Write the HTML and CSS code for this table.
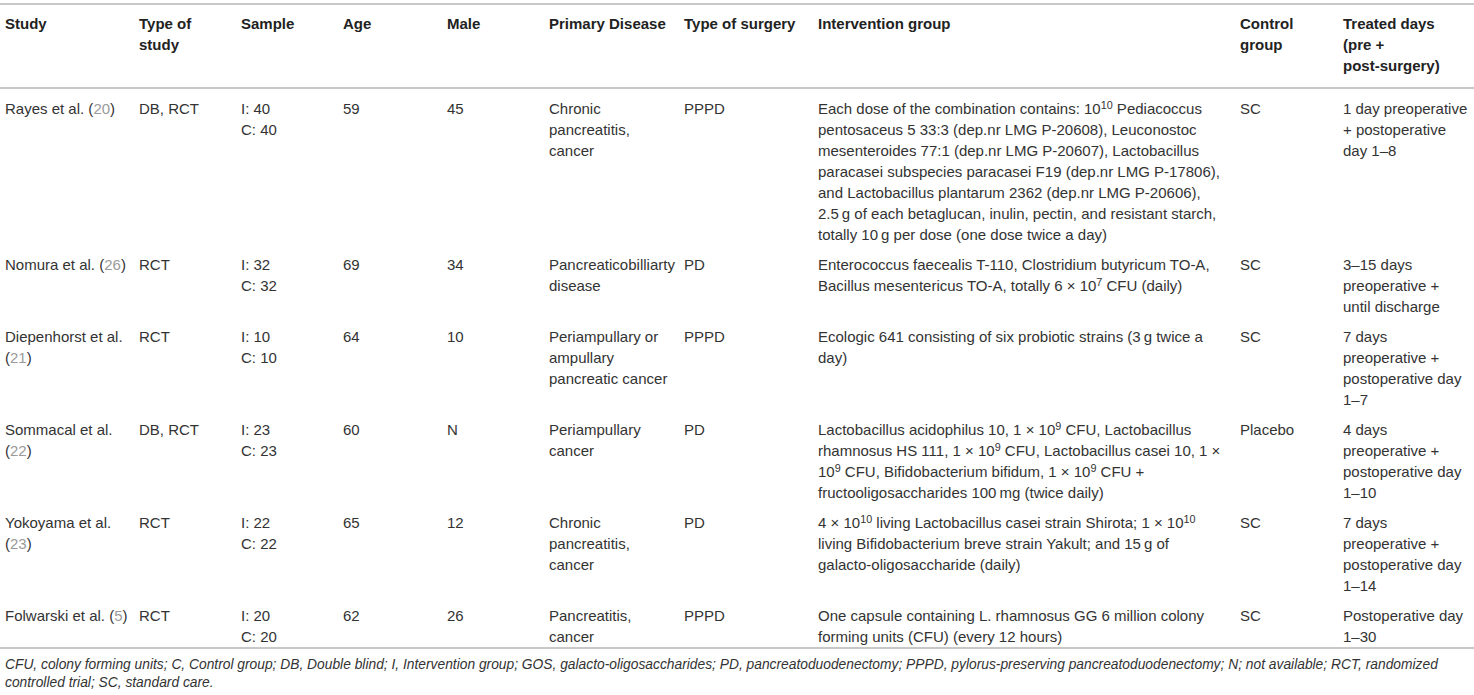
FILE: index.html
```html
<!DOCTYPE html>
<html lang="en">
<head>
<meta charset="utf-8">
<title>Probiotic studies table</title>
<link rel="stylesheet" href="styles.css">
</head>
<body>
<div class="wrap">
<table class="data">
  <colgroup>
    <col class="c1"><col class="c2"><col class="c3"><col class="c4"><col class="c5">
    <col class="c6"><col class="c7"><col class="c8"><col class="c9"><col class="c10">
  </colgroup>
  <thead>
    <tr>
      <th>Study</th>
      <th>Type of study</th>
      <th>Sample</th>
      <th>Age</th>
      <th>Male</th>
      <th>Primary Disease</th>
      <th>Type of surgery</th>
      <th>Intervention group</th>
      <th>Control group</th>
      <th>Treated days<br>(pre +<br>post-surgery)</th>
    </tr>
  </thead>
  <tbody>
    <tr>
      <td>Rayes et al. (<a class="ref">20</a>)</td>
      <td>DB, RCT</td>
      <td>I: 40<br>C: 40</td>
      <td>59</td>
      <td>45</td>
      <td>Chronic pancreatitis, cancer</td>
      <td>PPPD</td>
      <td>Each dose of the combination contains: 10<sup>10</sup> Pediacoccus pentosaceus 5 33:3 (dep.nr LMG P-20608), Leuconostoc mesenteroides 77:1 (dep.nr LMG P-20607), Lactobacillus paracasei subspecies paracasei F19 (dep.nr LMG P-17806), and Lactobacillus plantarum 2362 (dep.nr LMG P-20606), <span class="nw">2.5&#8201;g</span> of each betaglucan, inulin, pectin, and resistant starch, totally <span class="nw">10&#8201;g</span> per dose (one dose twice a day)</td>
      <td>SC</td>
      <td>1 day preoperative + postoperative day 1–8</td>
    </tr>
    <tr>
      <td>Nomura et al. (<a class="ref">26</a>)</td>
      <td>RCT</td>
      <td>I: 32<br>C: 32</td>
      <td>69</td>
      <td>34</td>
      <td>Pancreaticobilliarty disease</td>
      <td>PD</td>
      <td>Enterococcus faecealis T-110, Clostridium butyricum TO-A, Bacillus mesentericus TO-A, totally 6 × 10<sup>7</sup> CFU (daily)</td>
      <td>SC</td>
      <td>3–15 days preoperative + until discharge</td>
    </tr>
    <tr>
      <td>Diepenhorst et al. (<a class="ref">21</a>)</td>
      <td>RCT</td>
      <td>I: 10<br>C: 10</td>
      <td>64</td>
      <td>10</td>
      <td>Periampullary or ampullary pancreatic cancer</td>
      <td>PPPD</td>
      <td>Ecologic 641 consisting of six probiotic strains (<span class="nw">3&#8201;g</span> twice a day)</td>
      <td>SC</td>
      <td>7 days preoperative + postoperative day 1–7</td>
    </tr>
    <tr>
      <td>Sommacal et al. (<a class="ref">22</a>)</td>
      <td>DB, RCT</td>
      <td>I: 23<br>C: 23</td>
      <td>60</td>
      <td>N</td>
      <td>Periampullary cancer</td>
      <td>PD</td>
      <td>Lactobacillus acidophilus 10, 1 × 10<sup>9</sup> CFU, Lactobacillus rhamnosus HS 111, 1 × 10<sup>9</sup> CFU, Lactobacillus casei 10, 1 × 10<sup>9</sup> CFU, Bifidobacterium bifidum, 1 × 10<sup>9</sup> CFU + fructooligosaccharides <span class="nw">100&#8201;mg</span> (twice daily)</td>
      <td>Placebo</td>
      <td>4 days preoperative + postoperative day 1–10</td>
    </tr>
    <tr>
      <td>Yokoyama et al. (<a class="ref">23</a>)</td>
      <td>RCT</td>
      <td>I: 22<br>C: 22</td>
      <td>65</td>
      <td>12</td>
      <td>Chronic pancreatitis, cancer</td>
      <td>PD</td>
      <td>4 × 10<sup>10</sup> living Lactobacillus casei strain Shirota; 1 × 10<sup>10</sup> living Bifidobacterium breve strain Yakult; and <span class="nw">15&#8201;g</span> of <span class="nw">galacto-oligosaccharide</span> (daily)</td>
      <td>SC</td>
      <td>7 days preoperative + postoperative day 1–14</td>
    </tr>
    <tr>
      <td>Folwarski et al. (<a class="ref">5</a>)</td>
      <td>RCT</td>
      <td>I: 20<br>C: 20</td>
      <td>62</td>
      <td>26</td>
      <td>Pancreatitis, cancer</td>
      <td>PPPD</td>
      <td>One capsule containing L. rhamnosus GG 6 million colony forming units (CFU) (every 12 hours)</td>
      <td>SC</td>
      <td>Postoperative day 1–30</td>
    </tr>
  </tbody>
</table>
<p class="note">CFU, colony forming units; C, Control group; DB, Double blind; I, Intervention group; GOS, galacto-oligosaccharides; PD, pancreatoduodenectomy; PPPD, pylorus-preserving pancreatoduodenectomy; N; not available; RCT, randomized controlled trial; SC, standard care.</p>
</div>
</body>
</html>
```
FILE: styles.css
```css
html, body {
  margin: 0;
  padding: 0;
  background: #ffffff;
}

body {
  font-family: "Liberation Sans", Arial, Helvetica, sans-serif;
  color: #333333;
}

.wrap {
  width: 1474px;
  padding-top: 3px;
}

.data {
  width: 1474px;
  border-collapse: collapse;
  table-layout: fixed;
  font-size: 15px;
  border-top: 2px solid #c8c8c8;
  border-bottom: 2px solid #c8c8c8;
}

.c1 { width: 134px; }
.c2 { width: 102px; }
.c3 { width: 102px; }
.c4 { width: 104px; }
.c5 { width: 102px; }
.c6 { width: 135px; }
.c7 { width: 134px; }
.c8 { width: 422px; }
.c9 { width: 103px; }
.c10 { width: 136px; }

.data th {
  text-align: left;
  vertical-align: top;
  font-weight: bold;
  color: #222222;
  line-height: 21px;
  padding: 8px 5px 11px 5px;
  border-bottom: 2px solid #c8c8c8;
}

.data td {
  vertical-align: top;
  line-height: 21px;
  padding: 9px 5px 0 5px;
}

.data sup {
  font-size: 0.72em;
  line-height: 0;
  vertical-align: 0.45em;
}

.nw {
  white-space: nowrap;
}

.ref {
  color: #9a9a9a;
  text-decoration: none;
}

.note {
  margin: 7px 0 0 0;
  padding: 0 5px;
  font-size: 13.8px;
  line-height: 18px;
  font-style: italic;
  color: #333333;
}
```
